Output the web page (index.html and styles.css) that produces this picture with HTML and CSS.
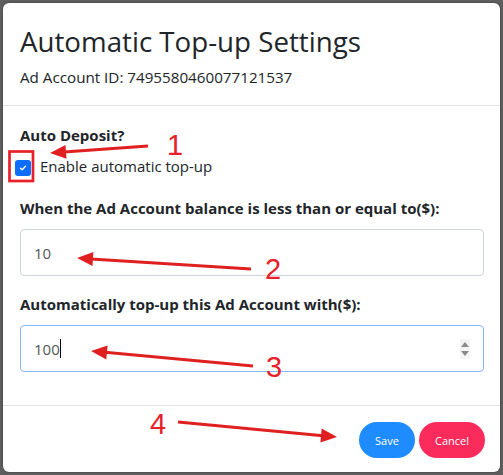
FILE: index.html
```html
<!DOCTYPE html>
<html lang="en">
<head>
  <meta charset="UTF-8" />
  <meta name="viewport" content="width=device-width, initial-scale=1.0"/>
  <title>Automatic Top-up Settings</title>
  <link rel="stylesheet" href="styles.css">
</head>
<body>
  <div class="modal">
    <div class="modal-header">
      <h1>Automatic Top-up Settings</h1>
      <p class="account-id">Ad Account ID: 7495580460077121537</p>
    </div>

    <div class="modal-body">
      <div class="field-label">Auto Deposit?</div>
      <label class="check-row">
        <span class="checkbox">
          <svg width="8" height="8" viewBox="0 0 8 8"><path d="M1.5 4.2 L3.2 5.8 L6.5 2.2" fill="none" stroke="#fff" stroke-width="1.3" stroke-linecap="round" stroke-linejoin="round"/></svg>
        </span>
        <span>Enable automatic top-up</span>
      </label>

      <div class="field-label gap-top">When the Ad Account balance is less than or equal to($):</div>
      <div class="input-box">
        <input type="text" value="10">
      </div>

      <div class="field-label gap-top short">Automatically top-up this Ad Account with($):</div>
      <div class="input-box focused">
        <span class="value">100</span><span class="caret"></span>
        <span class="spinner">
          <svg width="10" height="20" viewBox="0 0 10 20"><path d="M5 3 L9 8 L1 8 Z" fill="#8a8a8a"/><path d="M1 12 L9 12 L5 17 Z" fill="#8a8a8a"/></svg>
        </span>
      </div>
    </div>

    <div class="modal-footer">
      <button class="btn btn-save">Save</button>
      <button class="btn btn-cancel">Cancel</button>
    </div>
  </div>

  <!-- annotation marks drawn on top of the dialog -->
  <svg class="marks" width="503" height="475" viewBox="0 0 503 475">
    <rect x="9.5" y="151.5" width="23.5" height="29.5" fill="none" stroke="#e8202a" stroke-width="2.7"/>

    <line x1="148" y1="146" x2="64" y2="152" stroke="#e02020" stroke-width="3"/>
    <polygon points="50,153 65.5,144.9 66.5,158.8" fill="#e02020"/>
    <text x="167" y="155" class="num">1</text>

    <line x1="251" y1="269" x2="91" y2="259" stroke="#e02020" stroke-width="3"/>
    <polygon points="77,258 93.4,252 92.5,266" fill="#e02020"/>
    <text x="265" y="279" class="num">2</text>

    <line x1="253" y1="366" x2="105" y2="352.3" stroke="#e02020" stroke-width="3"/>
    <polygon points="91,351 107.6,345.5 106.3,359.5" fill="#e02020"/>
    <text x="266" y="377" class="num">3</text>

    <line x1="178" y1="422" x2="323" y2="435.7" stroke="#e02020" stroke-width="3"/>
    <polygon points="337,437 320.4,442.5 321.7,428.5" fill="#e02020"/>
    <text x="150" y="434" class="num">4</text>
  </svg>
</body>
</html>
```

FILE: styles.css
```css
body {
  margin: 0;
  padding: 3px;
  font-family: 'Open Sans', 'Noto Sans', sans-serif;
  background-color: #5e5e5e;
  color: #212529;
  position: relative;
  height: 475px;
  box-sizing: border-box;
  overflow: hidden;
}
.modal {
  width: 497px;
  background-color: #fff;
  border-radius: 6px;
  box-shadow: 0 0 2px rgba(0, 0, 0, 0.5);
  display: flex;
  flex-direction: column;
}
.modal-header {
  padding: 21px 17px 17px;
  border-bottom: 1px solid #e3e3e3;
}
.modal-header h1 {
  margin: 0;
  font-size: 27.7px;
  line-height: 34px;
  font-weight: 500;
}
.account-id {
  margin: 8px 0 0;
  font-size: 15.2px;
  line-height: 22px;
}
.modal-body {
  padding: 18px 16px 33px 17px;
  display: flex;
  flex-direction: column;
}
.field-label {
  font-size: 15px;
  line-height: 22px;
  font-weight: bold;
}
.gap-top {
  margin-top: 20px;
}
.gap-top.short {
  margin-top: 17px;
}
.check-row {
  display: flex;
  align-items: center;
  margin: 9px 0 0 -5px;
  font-size: 15px;
  line-height: 22px;
}
.checkbox {
  width: 16px;
  height: 16px;
  margin: 3px 9px 0 0;
  border-radius: 3px;
  background-color: #0d6efd;
  display: flex;
  align-items: center;
  justify-content: center;
}
.input-box {
  margin-top: 10px;
  height: 47px;
  box-sizing: border-box;
  border: 1px solid #ced4da;
  border-radius: 4px;
  padding: 0 13px;
  display: flex;
  align-items: center;
  font-size: 15px;
  color: #555;
}
.input-box input {
  border: none;
  outline: none;
  padding: 0;
  font: inherit;
  color: inherit;
  flex-grow: 1;
}
.input-box.focused {
  border-color: #86b7fe;
}
.caret {
  width: 1px;
  height: 19px;
  background-color: #000;
}
.spinner {
  margin-left: auto;
  display: flex;
  background-color: #f4f4f4;
}
.modal-footer {
  display: flex;
  justify-content: flex-end;
  gap: 4px;
  padding: 16px 15px 14px;
  border-top: 1px solid #e3e3e3;
}
.btn {
  height: 36px;
  border: none;
  border-radius: 18px;
  color: white;
  font-family: 'Open Sans', sans-serif;
  font-size: 11px;
  cursor: pointer;
}
.btn-save {
  width: 56px;
  background-color: #1e8cff;
}
.btn-cancel {
  width: 66px;
  background-color: #fb2b5b;
}
.marks {
  position: absolute;
  top: 0;
  left: 0;
  pointer-events: none;
}
.marks .num {
  font-family: 'Liberation Sans', sans-serif;
  font-size: 29px;
  fill: #e8202a;
}
```
